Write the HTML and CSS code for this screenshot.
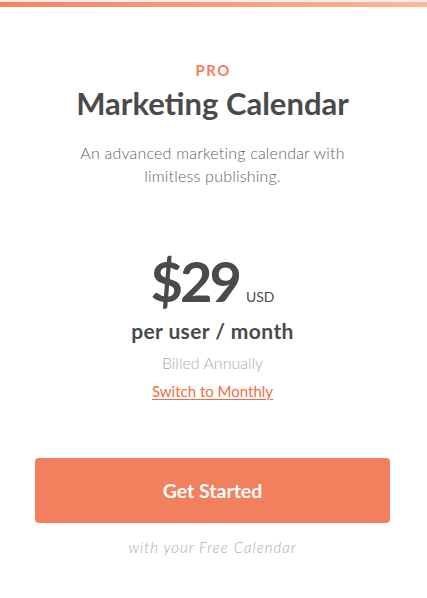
FILE: index.html
```html
<!DOCTYPE html>
<html>
<head>
<meta charset="utf-8">
<link rel="stylesheet" href="styles.css">
</head>
<body>
<div class="card">
  <div class="topbar"></div>
  <div class="content">
    <div class="tier">PRO</div>
    <h1 class="title">Marketing Calendar</h1>
    <p class="desc">An advanced marketing calendar with limitless publishing.</p>
    <div class="price">
      <span class="amount">$29</span>
      <span class="currency">USD</span>
    </div>
    <div class="period">per user / month</div>
    <div class="billed">Billed Annually</div>
    <a class="switch" href="#">Switch to Monthly</a>
    <a class="cta" href="#">Get Started</a>
    <div class="note">with your Free Calendar</div>
  </div>
</div>
</body>
</html>
```
FILE: styles.css
```css
html, body {
  margin: 0;
  padding: 0;
  background: #fff;
}
body {
  font-family: Lato, "Open Sans", sans-serif;
  color: #4a4a4a;
}
.card {
  width: 427px;
  height: 598px;
  border-top: 2px solid #eeeeee;
  box-sizing: border-box;
}
.topbar {
  height: 5px;
  background: linear-gradient(90deg, #f5835e 0%, #f89c7a 50%, #fdb898 100%);
}
.content {
  display: flex;
  flex-direction: column;
  align-items: center;
  padding: 54px 37px 0 35px;
}
.tier {
  font-size: 15px;
  font-weight: 700;
  letter-spacing: 1.5px;
  margin-right: -1.5px;
  color: #f2805e;
  line-height: 18px;
}
.title {
  margin: 6px 0 0;
  font-size: 31px;
  font-weight: 700;
  line-height: 36px;
  color: #4a4a4a;
}
.desc {
  margin: 20px 0 0;
  width: 300px;
  text-align: center;
  font-size: 16px;
  font-weight: 300;
  letter-spacing: 0.2px;
  line-height: 23px;
  color: #5f5f5f;
}
.price {
  margin-top: 66px;
  display: flex;
  align-items: baseline;
  gap: 7px;
  line-height: 1;
}
.amount {
  font-size: 56px;
  font-weight: 700;
  letter-spacing: -3px;
  color: #4a4a4a;
}
.currency {
  font-size: 14px;
  font-weight: 400;
  color: #4a4a4a;
}
.period {
  margin-top: 9px;
  font-size: 21px;
  font-weight: 700;
  letter-spacing: 0.4px;
  color: #4a4a4a;
  line-height: 26px;
}
.billed {
  margin-top: 9px;
  font-size: 16px;
  font-weight: 300;
  color: #ababab;
  line-height: 20px;
}
.switch {
  margin-top: 8px;
  font-size: 15px;
  font-weight: 400;
  line-height: 20px;
  color: #f26c43;
  text-decoration: underline;
  text-decoration-thickness: 1px;
  text-underline-offset: 2px;
}
.cta {
  margin-top: 57px;
  align-self: stretch;
  height: 65px;
  border-radius: 4px;
  background: #f2805e;
  color: #fff;
  font-size: 19.5px;
  font-weight: 700;
  text-decoration: none;
  display: flex;
  align-items: center;
  justify-content: center;
}
.note {
  margin-top: 14px;
  font-size: 15px;
  font-weight: 300;
  font-style: italic;
  letter-spacing: 1px;
  color: #ababab;
  line-height: 20px;
}
```
